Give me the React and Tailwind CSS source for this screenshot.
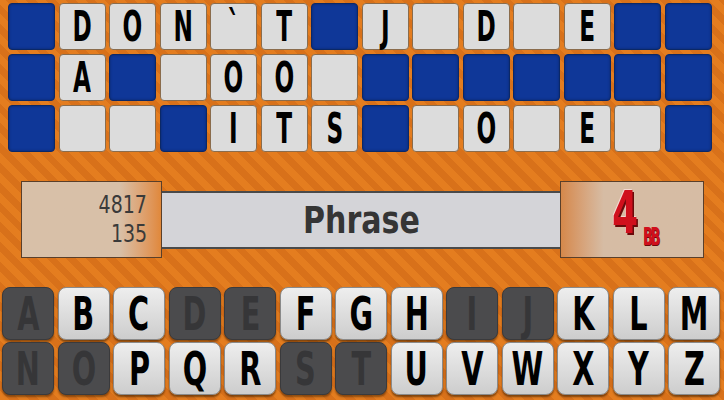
const board = [
  ['#', 'D', 'O', 'N', '`', 'T', '#', 'J', ' ', 'D', ' ', 'E', '#', '#'],
  ['#', 'A', '#', ' ', 'O', 'O', ' ', '#', '#', '#', '#', '#', '#', '#'],
  ['#', ' ', ' ', '#', 'I', 'T', 'S', '#', ' ', 'O', ' ', 'E', ' ', '#'],
]

const used = 'ADEIJNOST'
const keyRows = ['ABCDEFGHIJKLM', 'NOPQRSTUVWXYZ']

function Tile({ ch }) {
  if (ch === '#') {
    return <div className="h-[47px] rounded-[4px] bg-[#0f3798] border border-[#0b2867] shadow-[inset_0_0_3px_rgba(0,0,0,0.3)]" />
  }
  return (
    <div className="h-[47px] rounded-[4px] bg-[#dcdcdc] border border-[#8a6c4c] flex items-center justify-center">
      <span className="inline-block scale-x-[0.6] text-[43px] leading-[43px] font-bold text-black">
        {ch === ' ' ? '' : ch}
      </span>
    </div>
  )
}

function Key({ ch }) {
  const off = used.includes(ch)
  return (
    <div
      className={`h-[53px] rounded-[8px] flex items-center justify-center ${
        off
          ? 'bg-[#4b4b4d] border border-[#3a3a3c] shadow-[0_2px_2px_rgba(60,30,0,0.5)]'
          : 'bg-gradient-to-b from-[#eeeeee] to-[#cdcdcd] border border-[#8a8a8a] shadow-[0_2px_2px_rgba(60,30,0,0.6)]'
      }`}
    >
      <span
        className={`inline-block scale-x-[0.68] text-[47px] leading-[47px] font-bold ${
          off ? 'text-[#363638]' : 'text-black'
        }`}
      >
        {ch}
      </span>
    </div>
  )
}

export default function App() {
  return (
    <div className="w-[724px] h-[400px] overflow-hidden bg-[repeating-linear-gradient(45deg,#e47d1f_0px,#e47d1f_7px,#d8711a_7px,#d8711a_14px)] font-['DejaVu_Sans_Condensed',sans-serif]">
      {/* Board */}
      <div className="pt-[3px] pl-[8px] flex flex-col gap-[4px]">
        {board.map((row, r) => (
          <div key={r} className="grid grid-cols-[repeat(14,47px)] gap-x-[3.5px]">
            {row.map((ch, c) => (
              <Tile key={c} ch={ch} />
            ))}
          </div>
        ))}
      </div>

      {/* Info bar */}
      <div className="mt-[29px] ml-[21px] flex items-center h-[77px]">
        <div className="w-[141px] h-[77px] border border-[#5a3f2a] bg-gradient-to-r from-[#d8c0a8] from-70% to-[#e0883a] flex flex-col items-end justify-center pr-[14px] text-[#3a3a3a]">
          <span className="inline-block text-[24px] leading-[29px] scale-x-[0.88] origin-right">4817</span>
          <span className="inline-block text-[24px] leading-[29px] scale-x-[0.88] origin-right">135</span>
        </div>
        <div className="w-[398px] h-[58px] bg-[#d4d4d8] border-y-2 border-[#4a4a4a] flex items-center justify-center">
          <span className="inline-block text-[38px] leading-[40px] font-bold text-[#353535] scale-x-[0.88]">Phrase</span>
        </div>
        <div className="w-[144px] h-[77px] border border-[#5a3f2a] bg-gradient-to-r from-[#d5884a] via-[#d6bca4] via-30% to-[#d6bca4] flex items-center justify-center pl-[6px]">
          <span className="inline-block text-[58px] leading-[58px] font-bold text-[#d0101c] [text-shadow:2px_2px_0_#6a0a0a,-1px_-1px_0_#f4d8d0] scale-x-[0.72] -mt-[14px]">4</span>
          <span className="inline-block text-[24px] leading-[24px] font-bold tracking-[-4px] text-[#d0101c] [text-shadow:1px_1px_0_#6a0a0a] scale-x-[0.6] -ml-[5px] mt-[34px]">BB</span>
        </div>
      </div>

      {/* Keyboard */}
      <div className="mt-[29px] pl-[2px] flex flex-col gap-[2px]">
        {keyRows.map((row, r) => (
          <div key={r} className="grid grid-cols-[repeat(13,52px)] gap-x-[3.5px]">
            {row.split('').map((ch) => (
              <Key key={ch} ch={ch} />
            ))}
          </div>
        ))}
      </div>
    </div>
  )
}
